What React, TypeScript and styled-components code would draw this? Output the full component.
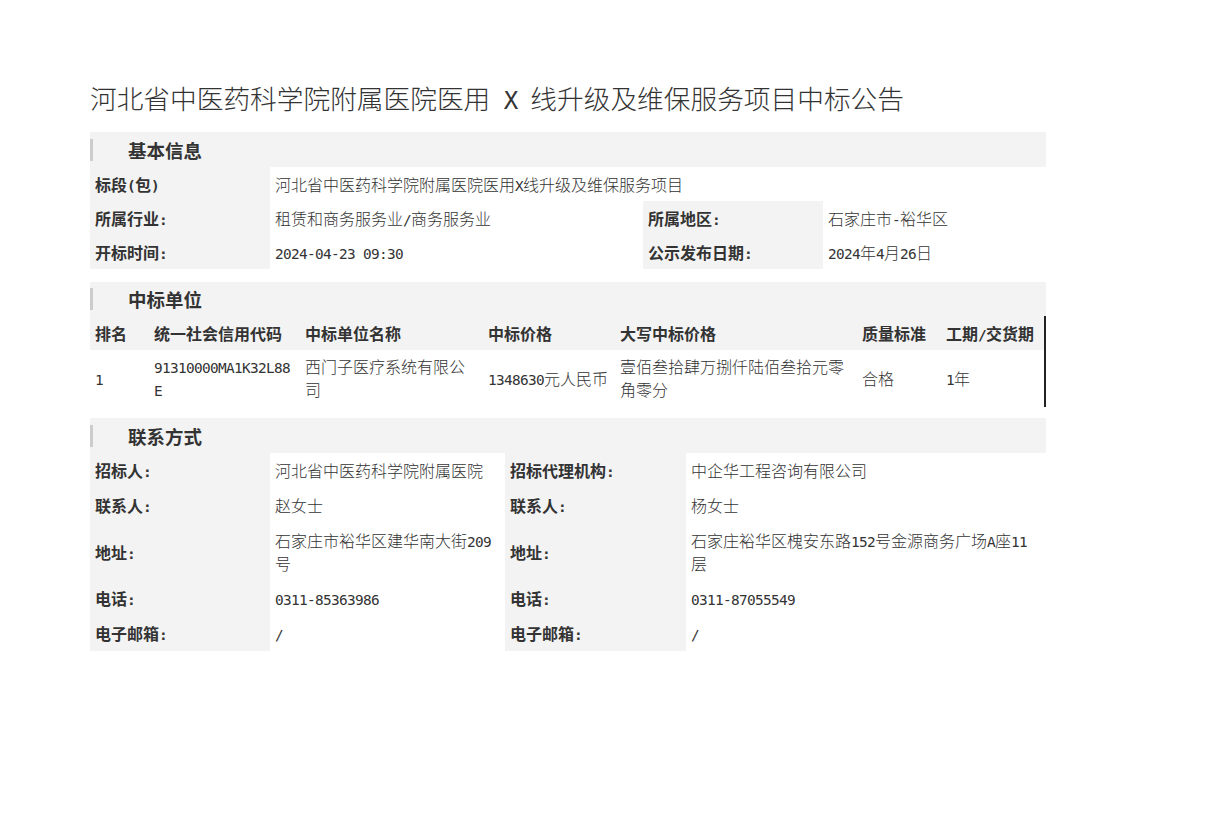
import React from "react";
import styled, { createGlobalStyle } from "styled-components";

const Global = createGlobalStyle`
  *, *::before, *::after { box-sizing: border-box; }
  html, body { margin: 0; padding: 0; background: #fff; }
  body {
    font-family: "Noto Sans CJK SC", "Noto Sans", sans-serif;
    color: #333;
  }
`;

const Latin = styled.span`
  font-family: "DejaVu Sans Mono", "Liberation Mono", monospace;
  font-size: 0.9em;
  letter-spacing: -0.0465em;
  line-height: 0;
`;

function Mixed({ text }: { text: string }) {
  const parts = text.split(/([\x20-\x7e]+)/).filter((p) => p !== "");
  return (
    <span>
      {parts.map((p, i) =>
        /^[\x20-\x7e]+$/.test(p) ? (
          <Latin key={i}>{p}</Latin>
        ) : (
          <React.Fragment key={i}>{p}</React.Fragment>
        )
      )}
    </span>
  );
}

const Page = styled.div`
  padding: 78px 0 40px 90px;
  width: 1046px;
`;

const Title = styled.h1`
  margin: 0 0 14px;
  font-size: 26.7px;
  font-weight: 300;
  line-height: 40px;
  color: #333;
  white-space: nowrap;
`;

const Section = styled.section<{ $gap: number }>`
  width: 956px;
  margin-bottom: ${(p) => p.$gap}px;
`;

const SectionHeader = styled.div<{ $h?: number }>`
  height: ${(p) => p.$h ?? 35}px;
  display: flex;
  align-items: center;
  background: #f3f3f3;
  font-size: 18.5px;
  font-weight: 700;
  color: #333;
  &::before {
    content: "";
    width: 3px;
    height: 22px;
    background: #cccccc;
    margin-right: 35px;
  }
`;

const InfoGrid = styled.div<{ $cols: string; $pad: number }>`
  display: grid;
  grid-template-columns: ${(p) => p.$cols};
  --cell-pad: ${(p) => p.$pad}px;
`;

const Label = styled.div`
  background: #f3f3f3;
  padding: var(--cell-pad) 5px;
  font-size: 16px;
  font-weight: 700;
  line-height: 23px;
  color: #333;
  display: flex;
  align-items: center;
`;

const Value = styled.div<{ $span?: number }>`
  grid-column: span ${(p) => p.$span ?? 1};
  background: #fff;
  padding: var(--cell-pad) 5px;
  font-size: 16px;
  font-weight: 300;
  line-height: 23px;
  color: #333;
  display: flex;
  align-items: center;
  word-break: break-all;
`;

const BidTable = styled.div`
  display: grid;
  grid-template-columns: 59px 151px 183px 132px 242px 84px 1fr;
  border-right: 2px solid #222;
`;

const Th = styled.div`
  background: #f3f3f3;
  padding: 5px 5px;
  font-size: 16px;
  font-weight: 700;
  line-height: 24px;
  color: #333;
  white-space: nowrap;
`;

const Td = styled.div`
  padding: 5px 5px 6px;
  font-size: 16px;
  font-weight: 300;
  line-height: 23px;
  color: #333;
  display: flex;
  align-items: center;
  word-break: break-all;
`;

type Cell = { label: string; value: string; span?: number };

const basicRows: Cell[][] = [
  [{ label: "标段(包)", value: "河北省中医药科学院附属医院医用X线升级及维保服务项目", span: 3 }],
  [
    { label: "所属行业:", value: "租赁和商务服务业/商务服务业" },
    { label: "所属地区:", value: "石家庄市-裕华区" },
  ],
  [
    { label: "开标时间:", value: "2024-04-23 09:30" },
    { label: "公示发布日期:", value: "2024年4月26日" },
  ],
];

const contactRows: Cell[][] = [
  [
    { label: "招标人:", value: "河北省中医药科学院附属医院" },
    { label: "招标代理机构:", value: "中企华工程咨询有限公司" },
  ],
  [
    { label: "联系人:", value: "赵女士" },
    { label: "联系人:", value: "杨女士" },
  ],
  [
    { label: "地址:", value: "石家庄市裕华区建华南大街209号" },
    { label: "地址:", value: "石家庄裕华区槐安东路152号金源商务广场A座11层" },
  ],
  [
    { label: "电话:", value: "0311-85363986" },
    { label: "电话:", value: "0311-87055549" },
  ],
  [
    { label: "电子邮箱:", value: "/" },
    { label: "电子邮箱:", value: "/" },
  ],
];

const bidHeaders = ["排名", "统一社会信用代码", "中标单位名称", "中标价格", "大写中标价格", "质量标准", "工期/交货期"];
const bidRow = [
  "1",
  "91310000MA1K32L88E",
  "西门子医疗系统有限公司",
  "1348630元人民币",
  "壹佰叁拾肆万捌仟陆佰叁拾元零角零分",
  "合格",
  "1年",
];

function InfoRows({ rows }: { rows: Cell[][] }) {
  return (
    <>
      {rows.map((row, ri) =>
        row.map((c, ci) => (
          <React.Fragment key={`${ri}-${ci}`}>
            <Label>
              <Mixed text={c.label} />
            </Label>
            <Value $span={c.span}>
              <Mixed text={c.value} />
            </Value>
          </React.Fragment>
        ))
      )}
    </>
  );
}

export default function App() {
  return (
    <>
      <Global />
      <Page>
        <Title>
          <Mixed text="河北省中医药科学院附属医院医用 X 线升级及维保服务项目中标公告" />
        </Title>

        <Section $gap={13}>
          <SectionHeader>基本信息</SectionHeader>
          <InfoGrid $cols="180px 373px 180px 1fr" $pad={5.5}>
            <InfoRows rows={basicRows} />
          </InfoGrid>
        </Section>

        <Section $gap={11}>
          <SectionHeader $h={34}>中标单位</SectionHeader>
          <BidTable>
            {bidHeaders.map((h) => (
              <Th key={h}>
                <Mixed text={h} />
              </Th>
            ))}
            {bidRow.map((v, i) => (
              <Td key={i}>
                <Mixed text={v} />
              </Td>
            ))}
          </BidTable>
        </Section>

        <Section $gap={0}>
          <SectionHeader>联系方式</SectionHeader>
          <InfoGrid $cols="180px 235px 181px 1fr" $pad={6}>
            <InfoRows rows={contactRows} />
          </InfoGrid>
        </Section>
      </Page>
    </>
  );
}
